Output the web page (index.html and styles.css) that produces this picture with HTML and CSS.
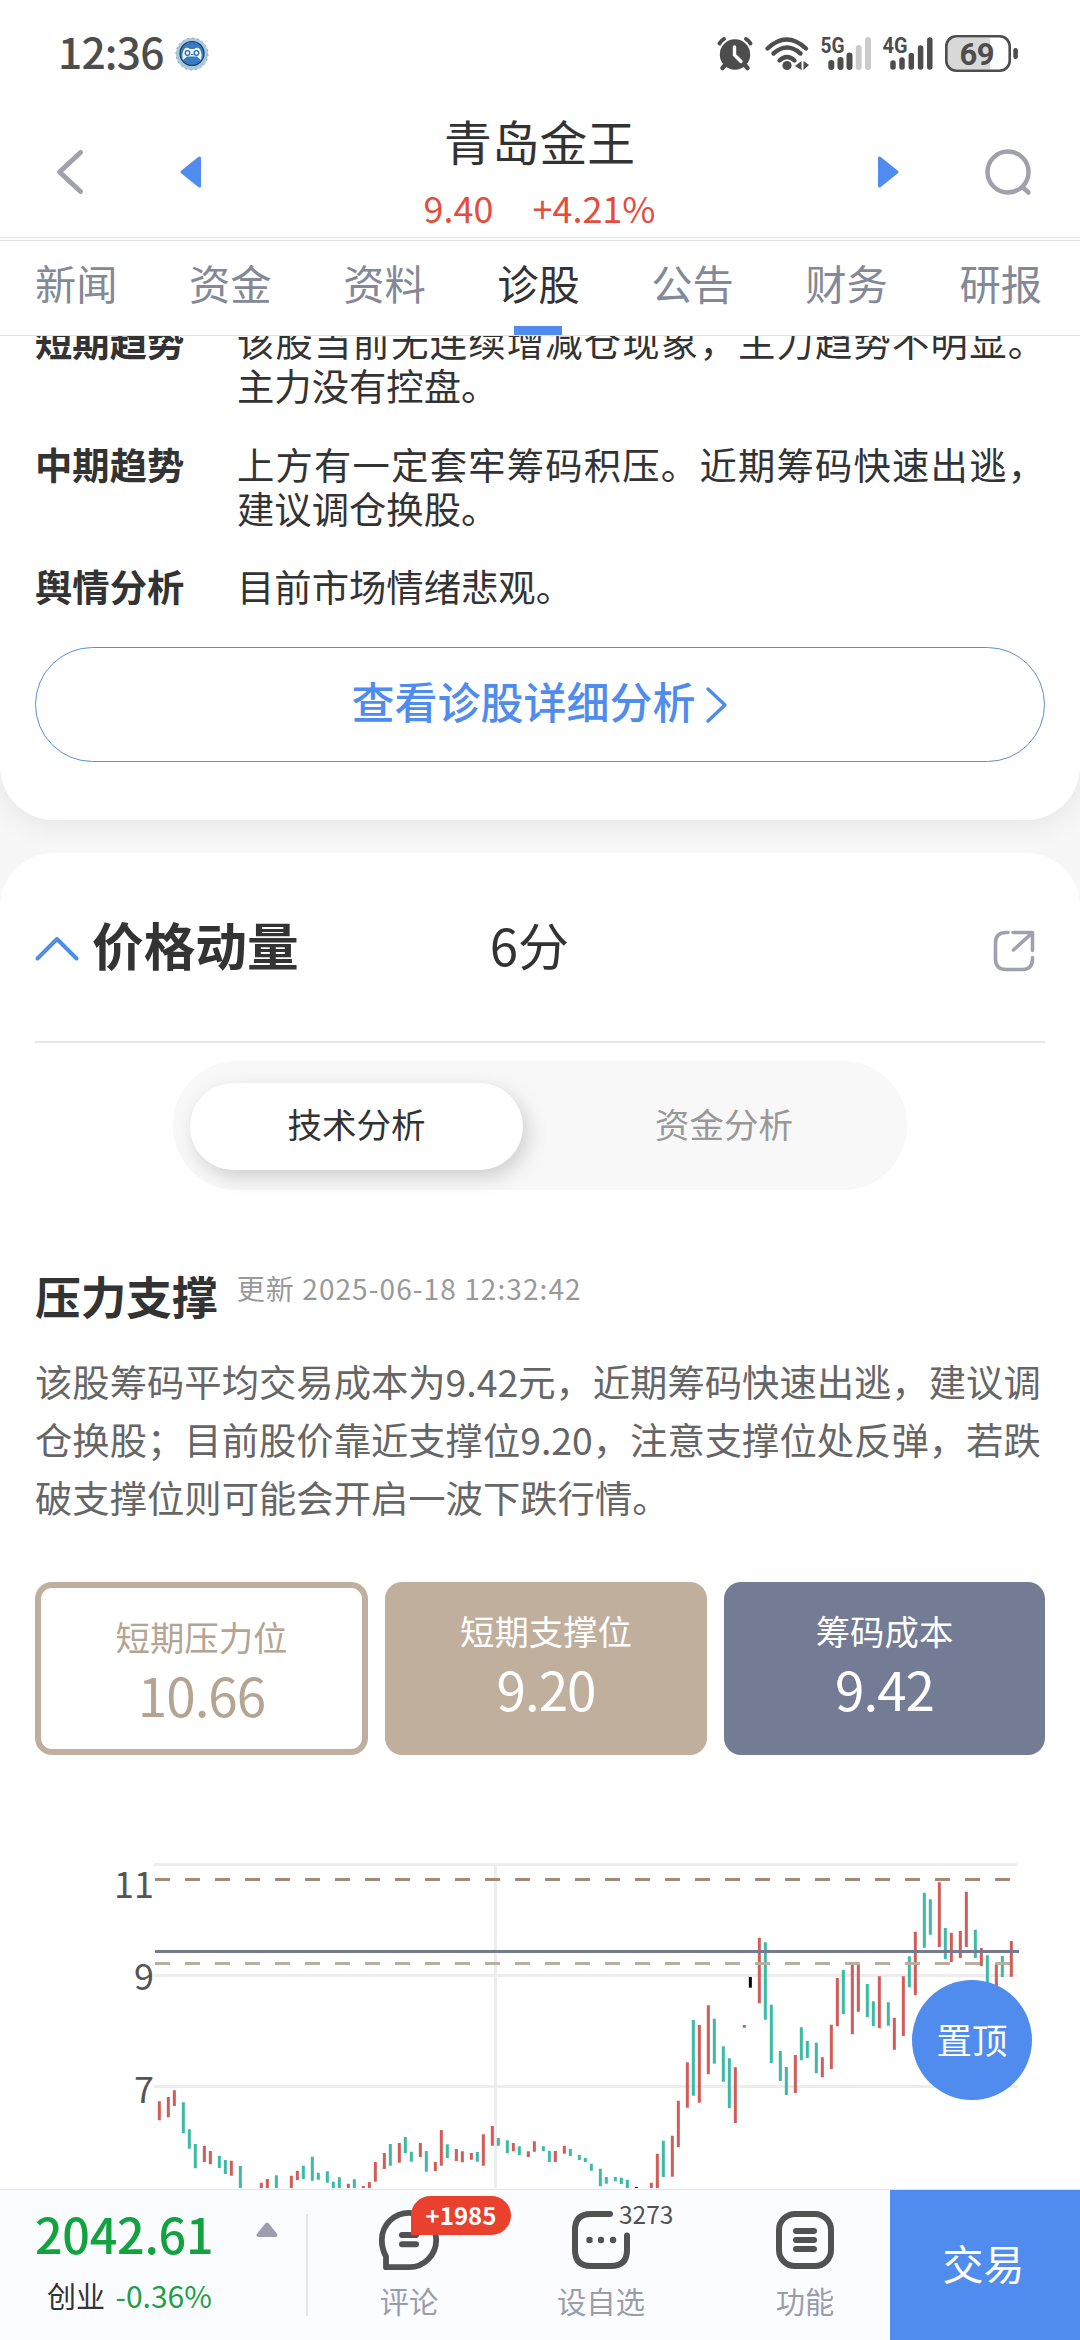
FILE: index.html
```html
<!DOCTYPE html>
<html lang="zh-CN">
<head>
<meta charset="utf-8">
<title>青岛金王 诊股</title>
<link rel="stylesheet" href="styles.css">
</head>
<body>
<div class="screen">
  <div class="status-bar">
    <span class="clock">12:36</span>
    <svg class="app-badge" width="34" height="36" viewBox="0 0 34 36">
      <circle cx="17" cy="18" r="16" fill="#a9c9d8"/>
      <circle cx="17" cy="18" r="16" fill="none" stroke="#7fa6bd" stroke-dasharray="2 3"/>
      <circle cx="17" cy="17.500" r="12" fill="#3a7cc4" stroke="#1d3f66" stroke-width="1.200"/>
      <path d="M8 24C6.500 19 8 13.500 10.500 12C13 11 14 12.500 15 13H19C20 12.500 21 11 23.500 12C26 13.500 27.500 19 26 24L22 20.500H12Z" fill="#f2f8fb"/>
      <circle cx="12.500" cy="17" r="2.300" fill="none" stroke="#2f6fae" stroke-width="1.300"/>
      <circle cx="21.500" cy="17" r="2.300" fill="none" stroke="#2f6fae" stroke-width="1.300"/>
      <path d="M16 18.500H18.500" stroke="#2f6fae" stroke-width="1.200"/>
    </svg>
    <svg class="status-icons" width="304" height="60" viewBox="716 24 304 60">
      <g fill="none" stroke="#4d4d4d" stroke-linecap="round">
        <circle cx="735" cy="54.500" r="15.200" fill="#4d4d4d" stroke="none"/>
        <path d="M719.500 43.500Q721 40.500 724 39M750.500 43.500Q749 40.500 746 39" stroke-width="4"/>
        <path d="M725.500 64.500L722.500 68M744.500 64.500L747.500 68" stroke-width="4.500"/>
        <path d="M734.500 47V55L741 61.500" stroke="#fff" stroke-width="3.400"/>
        <path d="M767.500 48.500Q786.500 30.500 806 48.500M773.500 53.500Q787 41.500 800.500 53.500M779.500 60.500Q787 53.500 794.500 60.500" stroke-width="4.400"/>
        <circle cx="787" cy="65.500" r="4.600" fill="#4d4d4d" stroke="none"/>
        <path d="M801.500 61V70L795 66Z M803.500 61V70L809 65Z" fill="#4d4d4d" stroke="none"/>
        <path d="M831.300 63V67M840.500 60V67M849.500 55.500V67" stroke-width="6"/>
        <path d="M858.700 48V67M868 40V67" stroke="#cbcbcb" stroke-width="6"/>
        <path d="M893 63V67M902 60V67M911.300 55.500V67M920.600 48V67M929.800 40V67" stroke-width="5.500"/>
      </g>
      <path d="M957 38H990V69.500H957Q947 69.500 947 60V47Q947 38 957 38Z" fill="#d8d8d8"/>
      <rect x="946.300" y="36.300" width="63.400" height="34.400" rx="10" fill="none" stroke="#4d4d4d" stroke-width="2.600"/>
      <rect x="1013.300" y="48" width="4.600" height="11" rx="2.300" fill="#4d4d4d"/>
      <g class="net-text">
        <text x="820.500" y="53" textLength="24" lengthAdjust="spacingAndGlyphs">5G</text>
        <text x="882.500" y="53" textLength="25" lengthAdjust="spacingAndGlyphs">4G</text>
        <text class="battery-text" x="959.500" y="65" textLength="35">69</text>
      </g>
    </svg>
  </div>

  <header class="header">
    <svg class="back" width="34" height="50" viewBox="0 0 34 50"><path d="M27.500 5.500L6.500 25L27.500 44.500" fill="none" stroke="#a0a1ac" stroke-width="5" stroke-linecap="round" stroke-linejoin="round"/></svg>
    <svg class="prev" width="24" height="34" viewBox="0 0 24 34"><path d="M20.500 3V31L3 17Z" fill="#508cee" stroke="#508cee" stroke-width="3" stroke-linejoin="round"/></svg>
    <div class="stock">
      <div class="stock-name">青岛金王</div>
      <div class="stock-quote"><span>9.40</span><span>+4.21%</span></div>
    </div>
    <svg class="next" width="24" height="34" viewBox="0 0 24 34"><path d="M3.500 3V31L21 17Z" fill="#508cee" stroke="#508cee" stroke-width="3" stroke-linejoin="round"/></svg>
    <svg class="search" width="50" height="50" viewBox="0 0 50 50"><circle cx="24" cy="25" r="20.500" fill="none" stroke="#a0a1ac" stroke-width="4.500"/><path d="M39 40.500L44.500 45.500" stroke="#a0a1ac" stroke-width="4.500" stroke-linecap="round"/></svg>
  </header>

  <nav class="tabs">
    <span>新闻</span><span>资金</span><span>资料</span><span class="active">诊股</span><span>公告</span><span>财务</span><span>研报</span>
  </nav>

  <main class="content">
    <section class="card diagnosis">
      <dl class="trends">
        <dt>短期趋势</dt><dd>该股当前无连续增减仓现象，主力趋势不明显。主力没有控盘。</dd>
        <dt>中期趋势</dt><dd>上方有一定套牢筹码积压。近期筹码快速出逃，建议调仓换股。</dd>
        <dt>舆情分析</dt><dd>目前市场情绪悲观。</dd>
      </dl>
      <div class="detail-button">
        <span>查看诊股详细分析</span>
        <svg width="24" height="40" viewBox="0 0 24 40"><path d="M3 4L20 20L3 36" fill="none" stroke="#508cee" stroke-width="3.400" stroke-linecap="round" stroke-linejoin="round"/></svg>
      </div>
    </section>

    <section class="card momentum">
      <div class="momentum-head">
        <svg width="44" height="26" viewBox="0 0 44 26"><path d="M2.500 22.500L22 3L41.500 22.500" fill="none" stroke="#508cee" stroke-width="4" stroke-linecap="round" stroke-linejoin="round"/></svg>
        <h2>价格动量</h2>
        <span class="score">6分</span>
        <svg class="share" width="42" height="42" viewBox="0 0 42 42"><path d="M15 2.500H13Q2.500 2.500 2.500 13V29Q2.500 39.500 13 39.500H29Q39.500 39.500 39.500 29V27.500M20 2.500H39.500V20.500M38.500 3.500L20.500 20" fill="none" stroke="#a0a1b0" stroke-width="3.600" stroke-linecap="round" stroke-linejoin="round"/></svg>
      </div>
      <div class="segment"><span class="on">技术分析</span><span class="off">资金分析</span></div>
      <div class="sub-head"><h3>压力支撑</h3><time>更新 2025-06-18 12:32:42</time></div>
      <p class="summary">该股筹码平均交易成本为9.42元，近期筹码快速出逃，建议调仓换股；目前股价靠近支撑位9.20，注意支撑位处反弹，若跌破支撑位则可能会开启一波下跌行情。</p>
      <div class="levels">
        <div class="level outline"><span>短期压力位</span><b>10.66</b></div>
        <div class="level tan"><span>短期支撑位</span><b>9.20</b></div>
        <div class="level slate"><span>筹码成本</span><b>9.42</b></div>
      </div>
      <svg class="chart" width="1080" height="349" viewBox="0 1840 1080 349">
        <path d="M153.500 1865.500H1017.500M153.500 1976.500H1017.500M153.500 2087.500H1017.500M495.500 1865.500V2189" stroke="#ededed" stroke-width="3" fill="none"/>
        <g class="axis"><text x="154" y="1898.500">11</text><text x="154" y="1990.500">9</text><text x="154" y="2103.500">7</text></g>
        <g class="candles" transform="translate(100 1840) scale(.33333)">
          <path class="up" d="M178 787V844M205 774V835M223 754V801M313 920V969M331 936V976M394 965V1010M484 1031V1048M502 1020V1048M574 1010V1048M592 995V1023M745 1034V1048M790 1041V1048M808 1029V1048M826 969V1028M853 942V990M898 912V971M961 912V954"/>
          <path class="down" d="M250 790V883M268 871V929M286 915V988M358 950V987M376 963V1005M421 981V1048M529 1009V1048M610 980V1020M637 953V1025M655 1001V1022M682 997V1031M700 1028V1048M718 1015V1048M763 1021V1048M871 915V980M916 894V943M934 938V968M979 936V998"/>
        </g>
        <g class="candles" transform="translate(420 1840) scale(.33333)">
          <path class="up" d="M46 969V996M64 873V980M109 930V966M127 937V970M154 942V962M190 886V980M217 861V920M280 912V937M325 937V954M343 907V938M406 936V969M433 920V944M694 1031V1048M712 944V1048M757 890V1013M775 785V925M802 670V806M838 558V791M865 499V706M946 685V852M973 558V566"/>
          <path class="down" d="M82 916V957M172 939V968M235 897V920M262 904V943M298 922V948M370 922V937M388 935V969M451 930V951M478 948V963M496 957V969M514 974V995M541 989V1042M559 1014V1034M586 1014V1027M604 1016V1035M622 1022V1048M730 905V1014M820 543V770M883 539V674M910 622V728M928 658V808"/>
          <path class="flat" d="M649 1044V1048"/>
        </g>
        <g class="candles" transform="translate(740 1840) scale(.33333)">
          <path class="up" d="M58 296V493M166 648V762M247 655V715M274 557V690M292 417V562M337 377V586M355 377V518M418 412V568M463 536V632M490 412V591M526 278V469M598 130V324M634 281V369M661 276V357M679 158V324M724 327V381M769 377V450M814 306V413"/>
          <path class="down" d="M76 310V542M94 497V672M121 636V726M139 684V768M184 565V664M202 606V657M229 611V703M310 393V525M382 435V535M400 487V562M445 490V560M508 352V445M553 161V326M571 181V287M616 267V360M706 272V357M742 349V450M787 351V414"/>
          <path class="flat" d="M31 414V446"/>
        </g>
        <path d="M155 1880.500H1011" stroke="#a08c76" stroke-width="3" stroke-dasharray="15 15"/>
        <path d="M155 1964.500H1011" stroke="#b9aea0" stroke-width="3" stroke-dasharray="15 15"/>
        <path d="M155 1952.500H1019" stroke="#747b91" stroke-width="3"/>
      </svg>
    </section>
  </main>

  <footer class="bottom-bar">
    <div class="index">
      <div class="index-value">2042.61</div>
      <div class="index-sub">创业 <span>-0.36%</span></div>
    </div>
    <svg class="expand" width="24" height="18" viewBox="0 0 24 18"><path d="M12 3.500L20.500 14H3.500Z" fill="#9c9eae" stroke="#9c9eae" stroke-width="4" stroke-linejoin="round"/></svg>
    <div class="divider"></div>
    <div class="action comment">
      <svg width="64" height="64" viewBox="0 0 64 64"><path d="M32 59.200H9V48.500Q4.800 41 4.800 32A27.200 27.200 0 1 1 32 59.200Z" fill="none" stroke="#525252" stroke-width="5.800" stroke-linejoin="round"/><path d="M25 27H39M25 36.300H39" stroke="#525252" stroke-width="6" stroke-linecap="round"/></svg>
      <em class="badge">+1985</em>
      <span>评论</span>
    </div>
    <div class="action watch">
      <svg width="64" height="64" viewBox="0 0 64 64"><path d="M41 6H22Q6 6 6 22V42Q6 58 22 58H42Q58 58 58 42V27.500" fill="none" stroke="#525252" stroke-width="6" stroke-linecap="round"/><g fill="#525252"><circle cx="20.500" cy="32" r="3.200"/><circle cx="32" cy="32" r="3.200"/><circle cx="44" cy="32" r="3.200"/></g></svg>
      <em class="count">3273</em>
      <span>设自选</span>
    </div>
    <div class="action feature">
      <svg width="64" height="64" viewBox="0 0 64 64"><rect x="6" y="6" width="52" height="52" rx="16" fill="none" stroke="#525252" stroke-width="6"/><path d="M23 23H41M23 32H41M23 41H41" stroke="#525252" stroke-width="6" stroke-linecap="round"/></svg>
      <span>功能</span>
    </div>
    <div class="trade">交易</div>
  </footer>
  <div class="to-top">置顶</div>
</div>
</body>
</html>
```
FILE: styles.css
```css
* { box-sizing: border-box; margin: 0; padding: 0; }
body { width: 1080px; background: #fff; font-family: "Noto Sans CJK SC", "Noto Sans", sans-serif; color: #333; }
svg { display: block; flex: none; }
em { font-style: normal; }
.screen { position: relative; width: 1080px; height: 2340px; display: flex; flex-direction: column; overflow: hidden; background: #fff; }

.status-bar { height: 102px; flex: none; display: flex; align-items: center; padding: 6px 60px 0 58px; }
.clock { font-size: 42.500px; font-weight: 500; line-height: 60px; letter-spacing: -.8px; color: #4d4d4d; width: 117px; margin-top: -6px; }
.status-icons { margin-left: auto; }
.net-text { font-family: Roboto, "Noto Sans", sans-serif; font-weight: 700; font-size: 21.500px; fill: #4d4d4d; }
.battery-text { font-size: 31px; }

.header { height: 136px; flex: none; display: flex; align-items: flex-start; border-bottom: 1px solid #e3e3e3; }
.back { margin: 45px 0 0 53px; }
.prev { margin: 53px 0 0 92px; }
.stock { flex: 1; text-align: center; margin-top: 9px; }
.stock-name { font-size: 47.800px; line-height: 60px; }
.stock-quote { display: flex; justify-content: center; gap: 39px; margin-top: 13px; font-size: 36px; line-height: 46px; color: #e24d3d; }
.next { margin: 53px 84px 0 0; }
.search { margin: 45px 46px 0 0; }

.tabs { position: relative; z-index: 1; height: 96px; flex: none; display: flex; justify-content: space-between; margin-top: 2px; padding: 0 38px 0 35px; border-top: 1px solid #e3e3e3; border-bottom: 1px solid #e3e3e3; font-size: 41.300px; line-height: 82px; color: #838996; background: #fff; }
.tabs span { display: flex; flex-direction: column; align-items: center; }
.tabs .active { color: #333; }
.tabs .active::after { content: ""; width: 48px; height: 9px; margin-top: 3px; background: #508cee; }

.content { flex: 1; min-height: 0; overflow: hidden; background: #f7f7f7; }
.card { background: #fff; padding: 0 35px; }
.diagnosis { margin-top: -17px; padding-bottom: 58px; border-radius: 0 0 54px 54px; box-shadow: 0 6px 30px rgba(0,0,0,.07); }
.trends { display: grid; grid-template-columns: 202px 808px; row-gap: 34.500px; font-size: 37.330px; line-height: 44px; }
.trends dt { font-weight: 700; }
.trends dd { text-align: justify; }
.detail-button { margin-top: 39px; height: 115px; border: 1px solid #5d8ed2; border-radius: 57.500px; display: flex; align-items: center; justify-content: center; gap: 9px; color: #508cee; font-size: 43px; font-weight: 500; line-height: 60px; }
.detail-button span { margin-top: -9px; }

.momentum { position: relative; margin-top: 33px; border-radius: 54px 54px 0 0; padding-bottom: 40px; }
.momentum-head { height: 190px; display: flex; align-items: flex-start; padding-top: 60px; border-bottom: 2px solid #e6e6e6; }
.momentum-head svg { margin-top: 23px; }
.momentum-head h2 { font-size: 51.700px; line-height: 62px; margin-left: 13px; }
.score { font-size: 51px; line-height: 62px; margin-left: 191px; }
.momentum-head .share { margin: 17px 10px 0 auto; }

.segment { width: 734px; height: 129px; margin: 18px auto 0; padding: 22px 17px; border-radius: 64px; background: #f8f8f8; display: flex; font-size: 34.500px; line-height: 80px; color: #999; }
.segment span { flex: 1; text-align: center; }
.segment .off { padding-left: 35px; }
.segment .on { flex: 0 0 333px; height: 87px; border-radius: 44px; background: #fff; color: #333; box-shadow: 5px 7px 20px rgba(0,0,0,.17); }

.sub-head { display: flex; align-items: flex-start; margin-top: 75px; }
.sub-head h3 { font-size: 45.700px; line-height: 60px; }
.sub-head time { font-size: 28px; line-height: 46px; letter-spacing: 1.080px; color: #999; margin: 0 0 0 19px; }
.summary { margin-top: 27px; font-size: 37.330px; line-height: 58px; color: #666; }

.levels { display: grid; grid-template-columns: 333px 322px 321px; gap: 17px; margin-top: 56px; height: 173px; }
.level { display: flex; flex-direction: column; align-items: center; border-radius: 17px; padding-top: 23px; color: #fff; }
.level span { font-size: 34.400px; line-height: 50px; }
.level b { font-size: 53px; font-weight: 400; line-height: 67px; letter-spacing: -1px; }
.outline { border: 6px solid #c0af9d; color: #b5a491; }
.tan { background: #c0af9d; }
.slate { background: #747b94; }

.chart { margin: 84px 0 0 -35px; }
.axis { font-size: 36px; fill: #555; text-anchor: end; }
.candles path { fill: none; stroke-width: 9; }
.up { stroke: #d25c57; }
.down { stroke: #3cbaa6; }
.flat { stroke: #000; }

.bottom-bar { height: 151px; flex: none; display: flex; align-items: flex-start; border-top: 1px solid #e0e3e8; background: #fbfcff; position: relative; }
.index { width: 220px; padding-left: 35px; }
.index-value { margin-top: 13px; font-size: 48.500px; font-weight: 500; line-height: 60px; letter-spacing: -.3px; color: #12a340; }
.index-sub { margin-top: 12px; padding-left: 12px; font-size: 29px; line-height: 40px; white-space: nowrap; }
.index-sub span { margin-left: 4px; color: #1f9f48; font-size: 30px; }
.expand { margin: 31px 0 0 35px; }
.divider { width: 2px; height: 102px; margin: 24px 0 0 27px; background: #e4e5ec; }
.action { position: relative; display: flex; flex-direction: column; align-items: center; width: 120px; padding-top: 18px; font-size: 29.300px; line-height: 40px; color: #9a9cab; }
.action > span { margin-top: 8px; }
.comment { margin-left: 41px; }
.watch { margin-left: 72px; }
.feature { margin-left: 84px; }
.badge { position: absolute; left: 62px; top: 6px; width: 100px; height: 39px; border-radius: 20px 20px 20px 0; background: #e9412e; color: #fff; font-size: 24px; font-weight: 700; line-height: 38px; text-align: center; }
.count { position: absolute; left: 78px; top: 4px; font-size: 24.500px; line-height: 40px; color: #525252; }
.trade { margin-left: auto; width: 190px; height: 150px; background: #508cee; color: #fff; font-size: 41px; line-height: 145px; text-align: center; padding-right: 3px; }
.to-top { position: absolute; left: 912px; top: 1980px; width: 120px; height: 120px; border-radius: 50%; background: #508cee; color: #fff; font-size: 35.500px; line-height: 118px; text-align: center; }
```
